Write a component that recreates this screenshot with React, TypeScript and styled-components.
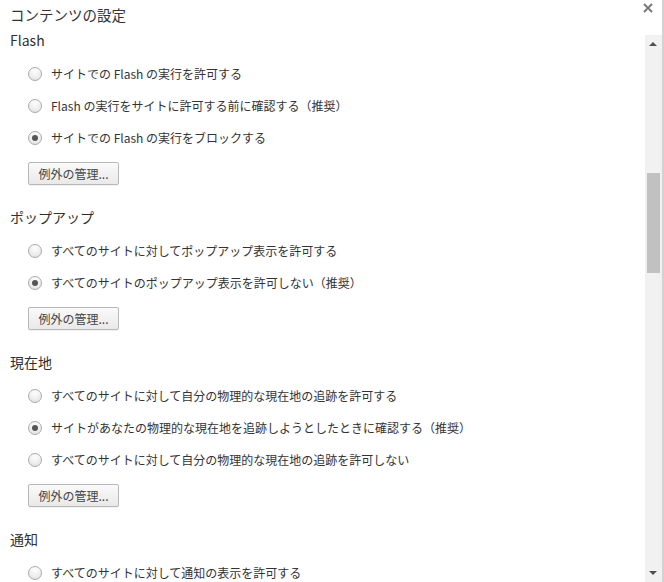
import React from 'react';
import styled, { createGlobalStyle } from 'styled-components';

const GlobalStyle = createGlobalStyle`
  html, body {
    margin: 0;
    padding: 0;
    background: #fff;
  }
  body {
    font-family: "Noto Sans CJK JP", "Noto Sans", sans-serif;
    color: #333;
  }
`;

interface Option {
  label: string;
  checked?: boolean;
}

interface Section {
  title: string;
  options: Option[];
  manage?: boolean;
}

const sections: Section[] = [
  {
    title: 'Flash',
    manage: true,
    options: [
      { label: 'サイトでの Flash の実行を許可する' },
      { label: 'Flash の実行をサイトに許可する前に確認する（推奨）' },
      { label: 'サイトでの Flash の実行をブロックする', checked: true },
    ],
  },
  {
    title: 'ポップアップ',
    manage: true,
    options: [
      { label: 'すべてのサイトに対してポップアップ表示を許可する' },
      { label: 'すべてのサイトのポップアップ表示を許可しない（推奨）', checked: true },
    ],
  },
  {
    title: '現在地',
    manage: true,
    options: [
      { label: 'すべてのサイトに対して自分の物理的な現在地の追跡を許可する' },
      { label: 'サイトがあなたの物理的な現在地を追跡しようとしたときに確認する（推奨）', checked: true },
      { label: 'すべてのサイトに対して自分の物理的な現在地の追跡を許可しない' },
    ],
  },
  {
    title: '通知',
    options: [{ label: 'すべてのサイトに対して通知の表示を許可する' }],
  },
];

const App: React.FC = () => {
  return (
    <>
      <GlobalStyle />
      <Dialog>
        <Header>
          <Title>コンテンツの設定</Title>
          <CloseButton aria-label="close">
            <svg width="10" height="10" viewBox="0 0 10 10">
              <path d="M1 1 L9 9 M9 1 L1 9" stroke="#7a7a7a" strokeWidth="2" />
            </svg>
          </CloseButton>
        </Header>
        <Body>
          <Content>
            {sections.map((s) => (
              <SectionBlock key={s.title}>
                <SectionTitle>{s.title}</SectionTitle>
                <Options>
                  {s.options.map((o) => (
                    <RadioRow key={o.label}>
                      <Radio checked={!!o.checked} />
                      <Label>{o.label}</Label>
                    </RadioRow>
                  ))}
                </Options>
                {s.manage && <ManageButton>例外の管理...</ManageButton>}
              </SectionBlock>
            ))}
          </Content>
          <ScrollTrack>
            <ArrowUp />
            <ThumbArea>
              <Thumb />
            </ThumbArea>
            <ArrowDown />
          </ScrollTrack>
        </Body>
      </Dialog>
    </>
  );
};

const Dialog = styled.div`
  width: 662px;
  height: 582px;
  border-right: 2px solid #d2d2d2;
  background: #fff;
  display: flex;
  flex-direction: column;
  overflow: hidden;
`;

const Header = styled.div`
  height: 30px;
  display: flex;
  align-items: center;
  justify-content: space-between;
  padding-left: 10px;
`;

const Title = styled.div`
  font-size: 14.5px;
  color: #333;
  line-height: 20px;
`;

const CloseButton = styled.div`
  width: 20px;
  height: 16px;
  margin-right: 4px;
  align-self: flex-start;
  display: flex;
  align-items: center;
  justify-content: center;
`;

const Body = styled.div`
  flex: 1;
  display: flex;
  min-height: 0;
`;

const Content = styled.div`
  flex: 1;
  padding-left: 10px;
  display: flex;
  flex-direction: column;
  gap: 22px;
`;

const SectionBlock = styled.div`
  display: flex;
  flex-direction: column;
  align-items: flex-start;
`;

const SectionTitle = styled.div`
  font-size: 14px;
  line-height: 20px;
  color: #303030;
`;

const Options = styled.div`
  margin-top: 8px;
  padding-left: 18px;
  display: flex;
  flex-direction: column;
`;

const RadioRow = styled.div`
  height: 32px;
  display: flex;
  align-items: center;
  gap: 9px;
`;

const Radio = styled.span<{ checked: boolean }>`
  width: 12px;
  height: 12px;
  border-radius: 50%;
  border: 1px solid #a9a9a9;
  background: radial-gradient(circle at 50% 30%, #fdfdfd 0%, #ececec 60%, #dcdcdc 100%);
  box-shadow: inset 0 1px 1px rgba(255, 255, 255, 0.8);
  display: flex;
  align-items: center;
  justify-content: center;

  &::after {
    content: '';
    width: 6px;
    height: 6px;
    border-radius: 50%;
    background: #555;
    display: ${({ checked }) => (checked ? 'block' : 'none')};
  }
`;

const Label = styled.span`
  font-size: 12px;
  line-height: 16px;
  color: #333;
  white-space: nowrap;
`;

const ManageButton = styled.button`
  margin-top: 8px;
  margin-left: 18px;
  width: 91px;
  height: 23px;
  padding: 0;
  border: 1px solid #b8b8b8;
  border-radius: 2px;
  background: linear-gradient(#fafafa, #e9e9e9);
  box-shadow: 0 1px 0 rgba(0, 0, 0, 0.05);
  font-family: "Noto Sans CJK JP", "Noto Sans", sans-serif;
  font-size: 12px;
  color: #444;
`;

const ScrollTrack = styled.div`
  width: 17px;
  margin-top: 5px;
  background: #f1f1f1;
  display: flex;
  flex-direction: column;
  align-items: center;
`;

const ArrowUp = styled.div`
  height: 17px;
  width: 17px;
  flex: none;
  position: relative;

  &::after {
    content: '';
    position: absolute;
    left: 4px;
    top: 7px;
    border-left: 4px solid transparent;
    border-right: 4px solid transparent;
    border-bottom: 4px solid #505050;
  }
`;

const ArrowDown = styled(ArrowUp)`
  &::after {
    top: 6px;
    border-bottom: none;
    border-top: 4px solid #505050;
  }
`;

const ThumbArea = styled.div`
  flex: 1;
  width: 100%;
  display: flex;
  justify-content: center;
  padding-top: 121px;
`;

const Thumb = styled.div`
  width: 13px;
  height: 100px;
  background: #c1c1c1;
`;

export default App;
